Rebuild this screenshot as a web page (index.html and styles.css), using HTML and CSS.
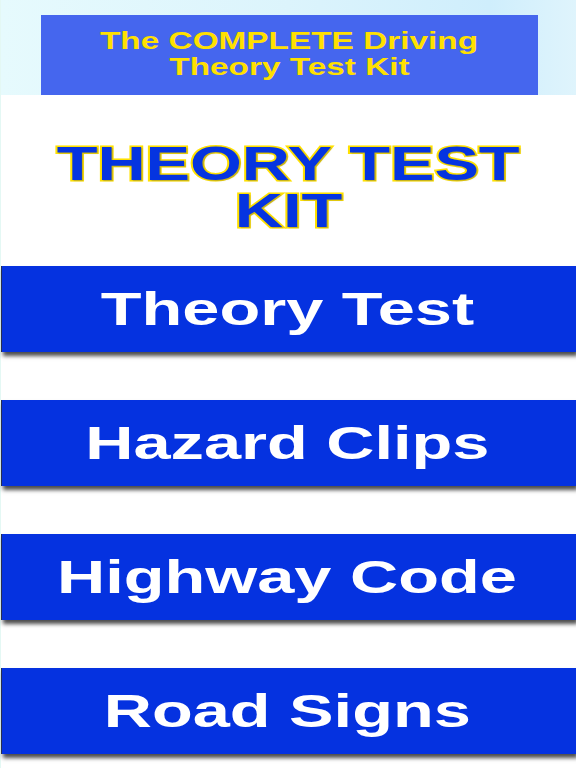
FILE: index.html
```html
<!DOCTYPE html>
<html>
<head>
<meta charset="utf-8">
<link rel="stylesheet" href="styles.css">
</head>
<body>
<div class="page">
  <div class="top">
    <div class="banner">
      <span class="wide banner-line">The COMPLETE Driving</span>
      <span class="wide banner-line">Theory Test Kit</span>
    </div>
  </div>
  <div class="title">
    <span class="wide title-line">THEORY TEST</span>
    <span class="wide title-line">KIT</span>
  </div>
  <div class="menu">
    <div class="btn"><span class="wide">Theory Test</span></div>
    <div class="btn"><span class="wide">Hazard Clips</span></div>
    <div class="btn"><span class="wide">Highway Code</span></div>
    <div class="btn"><span class="wide">Road Signs</span></div>
  </div>
</div>
</body>
</html>
```
FILE: styles.css
```css
html, body {
  margin: 0;
  padding: 0;
  background: #ffffff;
  overflow: hidden;
}
.page {
  width: 576px;
  height: 768px;
  font-family: "Liberation Sans", Arial, sans-serif;
  font-weight: bold;
  background: #ffffff;
  border-left: 1px solid #e4f8f4;
  box-sizing: border-box;
}
.top {
  height: 95px;
  padding-top: 15px;
  box-sizing: border-box;
  background: linear-gradient(90deg, #e6fafd 0%, #dcf4fc 50%, #cfeefc 85%, #dff4fc 100%);
}
.banner {
  margin-left: 40px;
  width: 497px;
  height: 80px;
  background: #4566ee;
  display: flex;
  flex-direction: column;
  align-items: center;
  padding-top: 13px;
  box-sizing: border-box;
}
.wide {
  display: inline-block;
  transform: scaleX(1.39);
  white-space: nowrap;
}
.banner-line {
  color: #ffe000;
  font-size: 24px;
  line-height: 26px;
}
.title {
  margin-top: 45px;
  display: flex;
  flex-direction: column;
  align-items: center;
}
.title-line {
  font-size: 49px;
  line-height: 47px;
  color: #0534e0;
  -webkit-text-stroke: 3px #ffe100;
  paint-order: stroke fill;
  transform: scaleX(1.36);
  text-shadow: 1px 1px 1px rgba(80, 80, 80, 0.35);
}
.menu {
  margin-top: 32px;
  display: flex;
  flex-direction: column;
  gap: 48px;
}
.btn {
  height: 86px;
  background: #0532e0;
  color: #ffffff;
  display: flex;
  align-items: center;
  justify-content: center;
  font-size: 47px;
  border-left: 1px solid #2a2f50;
  box-shadow: 2px 4px 4px rgba(0, 0, 0, 0.7);
  padding-bottom: 2px;
  padding-right: 4px;
  box-sizing: border-box;
}
.btn .wide {
  transform: scaleX(1.42);
}
```
